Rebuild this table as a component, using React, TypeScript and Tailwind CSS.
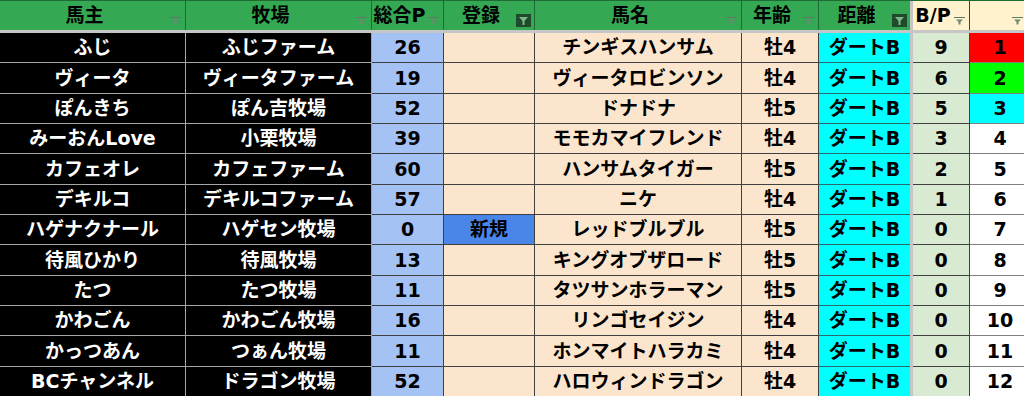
import React from "react";

type Row = {
  owner: string;
  farm: string;
  pts: string;
  reg: string;
  horse: string;
  age: string;
  dist: string;
  bp: string;
  rank: string;
  rankBg: string;
};

const rows: Row[] = [
  { owner: "ふじ", farm: "ふじファーム", pts: "26", reg: "", horse: "チンギスハンサム", age: "牡4", dist: "ダートB", bp: "9", rank: "1", rankBg: "bg-[#ff0000]" },
  { owner: "ヴィータ", farm: "ヴィータファーム", pts: "19", reg: "", horse: "ヴィータロビンソン", age: "牡4", dist: "ダートB", bp: "6", rank: "2", rankBg: "bg-[#00ff00]" },
  { owner: "ぽんきち", farm: "ぽん吉牧場", pts: "52", reg: "", horse: "ドナドナ", age: "牡5", dist: "ダートB", bp: "5", rank: "3", rankBg: "bg-[#00ffff]" },
  { owner: "みーおんLove", farm: "小栗牧場", pts: "39", reg: "", horse: "モモカマイフレンド", age: "牡4", dist: "ダートB", bp: "3", rank: "4", rankBg: "bg-white" },
  { owner: "カフェオレ", farm: "カフェファーム", pts: "60", reg: "", horse: "ハンサムタイガー", age: "牡5", dist: "ダートB", bp: "2", rank: "5", rankBg: "bg-white" },
  { owner: "デキルコ", farm: "デキルコファーム", pts: "57", reg: "", horse: "ニケ", age: "牡4", dist: "ダートB", bp: "1", rank: "6", rankBg: "bg-white" },
  { owner: "ハゲナクナール", farm: "ハゲセン牧場", pts: "0", reg: "新規", horse: "レッドブルブル", age: "牡5", dist: "ダートB", bp: "0", rank: "7", rankBg: "bg-white" },
  { owner: "待風ひかり", farm: "待風牧場", pts: "13", reg: "", horse: "キングオブザロード", age: "牡5", dist: "ダートB", bp: "0", rank: "8", rankBg: "bg-white" },
  { owner: "たつ", farm: "たつ牧場", pts: "11", reg: "", horse: "タツサンホラーマン", age: "牡5", dist: "ダートB", bp: "0", rank: "9", rankBg: "bg-white" },
  { owner: "かわごん", farm: "かわごん牧場", pts: "16", reg: "", horse: "リンゴセイジン", age: "牡4", dist: "ダートB", bp: "0", rank: "10", rankBg: "bg-white" },
  { owner: "かっつあん", farm: "つぁん牧場", pts: "11", reg: "", horse: "ホンマイトハラカミ", age: "牡4", dist: "ダートB", bp: "0", rank: "11", rankBg: "bg-white" },
  { owner: "BCチャンネル", farm: "ドラゴン牧場", pts: "52", reg: "", horse: "ハロウィンドラゴン", age: "牡4", dist: "ダートB", bp: "0", rank: "12", rankBg: "bg-white" },
];

function FilterIcon({ pos = "right-[4px] bottom-[5px]" }: { pos?: string }) {
  return (
    <svg width="11" height="8" viewBox="0 0 11 8" className={`absolute ${pos}`}>
      <rect x="0" y="0" width="11" height="1" fill="#5e7a64" />
      <polygon points="2,2.5 9,2.5 6.5,5 6.5,7.5 4.5,7.5 4.5,5" fill="#6e8a74" />
    </svg>
  );
}

function ActiveFilter() {
  return (
    <svg width="15" height="13" viewBox="0 0 15 13" className="absolute right-[3px] bottom-[3px]">
      <rect x="0" y="0" width="15" height="13" fill="#1f4a2b" />
      <polygon points="3,3 12,3 8.5,7 8.5,11 6.5,11 6.5,7" fill="#7fb98b" />
    </svg>
  );
}

function Head({
  w,
  label,
  active,
  bg = "bg-[#34a853]",
  border = "border-r border-[#1e6b33]",
  iconPos,
}: {
  w: string;
  label: string;
  active?: boolean;
  bg?: string;
  border?: string;
  iconPos?: string;
}) {
  return (
    <div className={`relative ${w} h-full shrink-0 ${bg} ${border} flex items-center pr-[16px]`}>
      <span className="flex-1 text-center whitespace-nowrap">{label}</span>
      {active ? <ActiveFilter /> : <FilterIcon pos={iconPos} />}
    </div>
  );
}

export default function App() {
  return (
    <div
      className="w-[1024px] h-[396px] overflow-hidden bg-white text-black font-bold text-[19px] leading-none"
      style={{ fontFamily: '"DejaVu Sans", "Noto Sans CJK JP", sans-serif' }}
    >
      <div className="w-[1040px]">
        {/* header */}
        <div className="flex h-[30px] border-t border-[#1e6b33]">
          <Head w="w-[186px]" label="馬主" />
          <Head w="w-[186px]" label="牧場" />
          <Head w="w-[72px]" label="総合P" />
          <Head w="w-[91px]" label="登録" active />
          <Head w="w-[207px]" label="馬名" />
          <Head w="w-[77px]" label="年齢" />
          <Head w="w-[91px]" label="距離" active border="" />
          <div className="w-[3px] h-full shrink-0 bg-[#c6c6c6]" />
          <Head w="w-[57px]" label="B/P" bg="bg-[#fff2cc]" border="border-r border-[#404040]" />
          <Head w="w-[60px]" label="" bg="bg-[#fff2cc]" border="" iconPos="right-[7px] bottom-[5px]" />
        </div>
        <div className="h-[3px] bg-[#c6c6c6]" />
        {/* rows */}
        <div className="flex flex-col">
          {rows.map((r, i) => (
            <div key={i} className="flex h-[30.35px]">
              <div className="w-[186px] shrink-0 bg-black text-white border-r border-b border-[#a6a6a6] flex items-center justify-center whitespace-nowrap">
                {r.owner}
              </div>
              <div className="w-[186px] shrink-0 bg-black text-white border-r border-b border-[#a6a6a6] flex items-center justify-center whitespace-nowrap">
                {r.farm}
              </div>
              <div className="w-[72px] shrink-0 bg-[#a4c2f4] border-r border-b border-[#404040] flex items-center justify-center">
                {r.pts}
              </div>
              <div
                className={`w-[91px] shrink-0 ${r.reg ? "bg-[#4a86e8]" : "bg-[#fce5cd]"} border-r border-b border-[#404040] flex items-center justify-center`}
              >
                {r.reg}
              </div>
              <div className="w-[207px] shrink-0 bg-[#fce5cd] border-r border-b border-[#404040] flex items-center justify-center whitespace-nowrap">
                {r.horse}
              </div>
              <div className="w-[77px] shrink-0 bg-[#fce5cd] border-r border-b border-[#404040] flex items-center justify-center">
                {r.age}
              </div>
              <div className="w-[91px] shrink-0 bg-[#00ffff] border-b border-[#2c6b6b] flex items-center justify-center whitespace-nowrap">
                {r.dist}
              </div>
              <div className="w-[3px] shrink-0 bg-[#c6c6c6]" />
              <div className="w-[57px] shrink-0 bg-[#d9ead3] border-r border-b border-[#404040] flex items-center justify-center">
                {r.bp}
              </div>
              <div className={`w-[60px] shrink-0 ${r.rankBg} border-b border-[#808080] flex items-center justify-center`}>
                {r.rank}
              </div>
            </div>
          ))}
        </div>
      </div>
    </div>
  );
}
